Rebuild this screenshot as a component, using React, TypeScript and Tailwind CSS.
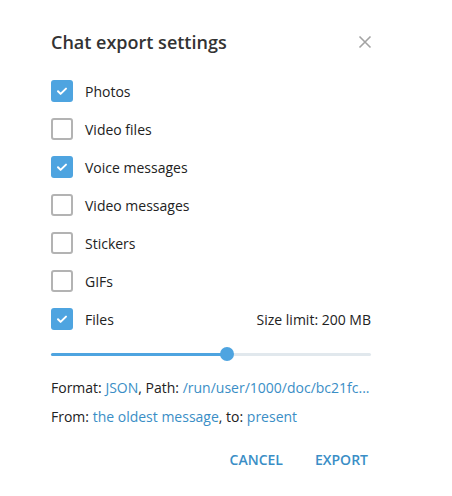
import { useState } from "react";

type Item = { label: string; checked: boolean };

const initialItems: Item[] = [
  { label: "Photos", checked: true },
  { label: "Video files", checked: false },
  { label: "Voice messages", checked: true },
  { label: "Video messages", checked: false },
  { label: "Stickers", checked: false },
  { label: "GIFs", checked: false },
  { label: "Files", checked: true },
];

function Checkbox({ checked }: { checked: boolean }) {
  if (checked) {
    return (
      <span className="flex h-[22px] w-[22px] flex-none items-center justify-center rounded-[3px] bg-[#4ea4e0]">
        <svg width="14" height="14" viewBox="0 0 14 14" fill="none">
          <path d="M3 7.3l2.6 2.6L11 4.6" stroke="white" strokeWidth="2" strokeLinecap="round" strokeLinejoin="round" />
        </svg>
      </span>
    );
  }
  return <span className="h-[22px] w-[22px] flex-none rounded-[3px] border-2 border-[#b3b3b3] bg-white" />;
}

export default function App() {
  const [items, setItems] = useState(initialItems);

  const toggle = (index: number) =>
    setItems((prev) => prev.map((it, i) => (i === index ? { ...it, checked: !it.checked } : it)));

  return (
    <div className="h-[496px] w-[452px] bg-white pl-[51px] pt-[30px] font-['Open_Sans',sans-serif] text-[14px] text-[#222]">
      <div className="flex w-[322px] items-center justify-between">
        <h1 className="text-[18px] font-semibold leading-[24px] text-[#333]">Chat export settings</h1>
        <svg width="14" height="14" viewBox="0 0 14 14" className="mr-[1px]">
          <path d="M1.5 1.5l11 11M12.5 1.5l-11 11" stroke="#a3a3a3" strokeWidth="1.6" />
        </svg>
      </div>

      <div className="mt-[18px] w-[320px]">
        {items.map((item, i) => (
          <div key={item.label} className="flex h-[38px] items-center" onClick={() => toggle(i)}>
            <Checkbox checked={item.checked} />
            <span className="ml-[12px] flex-1">{item.label}</span>
            {item.label === "Files" && <span className="text-[#222]">Size limit: 200 MB</span>}
          </div>
        ))}

        <div className="relative flex h-[32px] items-center">
          <div className="h-[3px] w-full rounded-full bg-[#e1e8ed]" />
          <div className="absolute left-0 h-[3px] w-[176px] rounded-full bg-[#4ea4e0]" />
          <div className="absolute left-[169px] h-[14px] w-[14px] rounded-full bg-[#4ea4e0]" />
        </div>

        <p className="mt-[8px] leading-[20px]">
          Format: <span className="text-[#3a8ec6]">JSON</span>, Path:{" "}
          <span className="text-[#3a8ec6]">/run/user/1000/doc/bc21fc...</span>
        </p>
        <p className="mt-[9px] leading-[20px]">
          From: <span className="text-[#3a8ec6]">the oldest message</span>, to:{" "}
          <span className="text-[#3a8ec6]">present</span>
        </p>

        <div className="mt-[21px] flex justify-end gap-[32px] pr-[3px]">
          <button className="text-[14px] font-semibold uppercase leading-[24px] text-[#3a8ec6]">Cancel</button>
          <button className="text-[14px] font-semibold uppercase leading-[24px] text-[#3a8ec6]">Export</button>
        </div>
      </div>
    </div>
  );
}
